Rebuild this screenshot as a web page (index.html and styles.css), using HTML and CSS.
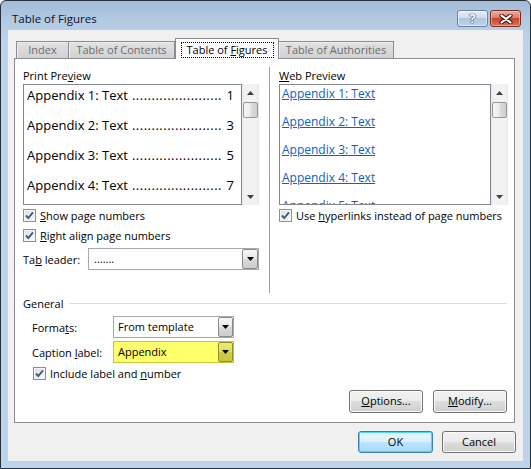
FILE: index.html
```html
<!DOCTYPE html>
<html>
<head>
<meta charset="utf-8">
<link rel="stylesheet" href="styles.css">
</head>
<body>
<div class="window">
  <div class="titlebar">
    <div class="title">Table of Figures</div>
    <div class="capbtn help">?</div>
    <div class="capbtn close">
      <svg width="14" height="10" viewBox="0 0 14 10">
        <path d="M2.5 1.5 L11.5 8.5 M11.5 1.5 L2.5 8.5" stroke="#4a1a12" stroke-width="4.2" stroke-linecap="round"/>
        <path d="M2.5 1.5 L11.5 8.5 M11.5 1.5 L2.5 8.5" stroke="#ffffff" stroke-width="2.2" stroke-linecap="round"/>
      </svg>
    </div>
  </div>
  <div class="client">
    <div class="tabs">
      <div class="tab t-index">Index</div>
      <div class="tab t-toc">Table of Contents</div>
      <div class="tab active t-tof"><span class="focus">Table of <u>F</u>igures</span></div>
      <div class="tab t-toa">Table of Authorities</div>
    </div>
    <div class="panel">
      <div class="top">
        <div class="col left">
          <div class="label">Print Pre<u>v</u>iew</div>
          <div class="previewrow">
            <div class="box print">
              <div class="entry"><span>Appendix 1: Text</span><span class="leader">.......................</span><span class="num">1</span></div>
              <div class="entry"><span>Appendix 2: Text</span><span class="leader">.......................</span><span class="num">3</span></div>
              <div class="entry"><span>Appendix 3: Text</span><span class="leader">.......................</span><span class="num">5</span></div>
              <div class="entry"><span>Appendix 4: Text</span><span class="leader">.......................</span><span class="num">7</span></div>
            </div>
            <div class="vscroll">
              <div class="arrow"><svg width="7" height="4" viewBox="0 0 7 4"><polygon points="0,4 7,4 3.5,0" fill="#404040"/></svg></div>
              <div class="thumb"></div>
              <div class="spacer"></div>
              <div class="arrow"><svg width="7" height="4" viewBox="0 0 7 4"><polygon points="0,0 7,0 3.5,4" fill="#404040"/></svg></div>
            </div>
          </div>
          <div class="check">
            <span class="cb"><svg width="11" height="11" viewBox="0 0 11 11"><path d="M2 5.5 L4.3 8 L9 2.3" fill="none" stroke="#425a8a" stroke-width="1.9"/></svg></span>
            <span><u>S</u>how page numbers</span>
          </div>
          <div class="check">
            <span class="cb"><svg width="11" height="11" viewBox="0 0 11 11"><path d="M2 5.5 L4.3 8 L9 2.3" fill="none" stroke="#425a8a" stroke-width="1.9"/></svg></span>
            <span><u>R</u>ight align page numbers</span>
          </div>
          <div class="field leaderrow">
            <span class="flabel lead">Ta<u>b</u> leader:</span>
            <div class="combo wide">
              <span class="val">.......</span>
              <span class="drop"><svg width="7" height="4" viewBox="0 0 7 4"><polygon points="0,0 7,0 3.5,4" fill="#000"/></svg></span>
            </div>
          </div>
        </div>
        <div class="vline"></div>
        <div class="col right">
          <div class="label"><u>W</u>eb Preview</div>
          <div class="previewrow">
            <div class="box web">
              <div class="link">Appendix 1: Text</div>
              <div class="link">Appendix 2: Text</div>
              <div class="link">Appendix 3: Text</div>
              <div class="link">Appendix 4: Text</div>
              <div class="link">Appendix 5: Text</div>
            </div>
            <div class="vscroll">
              <div class="arrow"><svg width="7" height="4" viewBox="0 0 7 4"><polygon points="0,4 7,4 3.5,0" fill="#404040"/></svg></div>
              <div class="thumb"></div>
              <div class="spacer"></div>
              <div class="arrow"><svg width="7" height="4" viewBox="0 0 7 4"><polygon points="0,0 7,0 3.5,4" fill="#404040"/></svg></div>
            </div>
          </div>
          <div class="check">
            <span class="cb"><svg width="11" height="11" viewBox="0 0 11 11"><path d="M2 5.5 L4.3 8 L9 2.3" fill="none" stroke="#425a8a" stroke-width="1.9"/></svg></span>
            <span>Use <u>h</u>yperlinks instead of page numbers</span>
          </div>
        </div>
      </div>
      <div class="general"><span>General</span><span class="gline"></span></div>
      <div class="field f1">
        <span class="flabel">Forma<u>t</u>s:</span>
        <div class="combo">
          <span class="val">From template</span>
          <span class="drop"><svg width="7" height="4" viewBox="0 0 7 4"><polygon points="0,0 7,0 3.5,4" fill="#000"/></svg></span>
        </div>
      </div>
      <div class="field f2">
        <span class="flabel">Caption <u>l</u>abel:</span>
        <div class="combo yellow">
          <span class="val">Appendix</span>
          <span class="drop"><svg width="7" height="4" viewBox="0 0 7 4"><polygon points="0,0 7,0 3.5,4" fill="#000"/></svg></span>
        </div>
      </div>
      <div class="check include">
        <span class="cb"><svg width="11" height="11" viewBox="0 0 11 11"><path d="M2 5.5 L4.3 8 L9 2.3" fill="none" stroke="#425a8a" stroke-width="1.9"/></svg></span>
        <span>Include label and <u>n</u>umber</span>
      </div>
      <div class="panelbtns">
        <div class="btn"><u>O</u>ptions...</div>
        <div class="btn"><u>M</u>odify...</div>
      </div>
    </div>
    <div class="footer">
      <div class="btn ok">OK</div>
      <div class="btn cancel">Cancel</div>
    </div>
  </div>
</div>
</body>
</html>
```

FILE: styles.css
```css
html, body {
  margin: 0;
  padding: 0;
  background: #ffffff;
}
body {
  font-family: "Open Sans", "Noto Sans", sans-serif;
  font-size: 11px;
  color: #000;
}
u { text-decoration: underline; text-underline-offset: 1px; }

.window {
  width: 531px;
  height: 469px;
  box-sizing: border-box;
  border: 1px solid #28323c;
  border-radius: 6px 6px 0 0;
  background: linear-gradient(#a3bbd7 0px, #b3cae3 20px, #bcd3ec 40px, #bcd3ec 100%);
  padding: 0 7px 7px 7px;
  display: flex;
  flex-direction: column;
  overflow: hidden;
}

.titlebar {
  height: 29px;
  display: flex;
  align-items: flex-start;
  flex: none;
}
.title {
  flex: 1;
  margin: 10px 0 0 4px;
  line-height: 16px;
  font-size: 11.5px;
  color: #0e0e2a;
}
.capbtn {
  margin-top: 9px;
  width: 31px;
  height: 17px;
  box-sizing: border-box;
  border-radius: 3px;
  display: flex;
  align-items: center;
  justify-content: center;
}
.help {
  border: 1px solid #6a819f;
  background: linear-gradient(#e6eef8 0%, #ccdbee 45%, #aec6e2 50%, #bfd4eb 100%);
  box-shadow: inset 0 0 0 1px rgba(255,255,255,0.5);
  color: #fff;
  font-weight: bold;
  font-size: 13px;
  line-height: 15px;
  text-shadow: 0 0 1px #2a3a55, 0 0 1px #2a3a55, 0 0 1px #2a3a55;
}
.close {
  margin-left: 2px;
  margin-right: 2px;
  border: 1px solid #7b2a20;
  background: linear-gradient(#eab0a4 0%, #d87b68 45%, #c5472f 50%, #d9725c 100%);
  box-shadow: inset 0 0 0 1px rgba(255,210,200,0.5);
}

.client {
  flex: 1;
  background: #f0f0f0;
  display: flex;
  flex-direction: column;
}

.tabs {
  height: 28px;
  flex: none;
  display: flex;
  align-items: flex-end;
  padding-left: 8px;
}
.tab {
  box-sizing: border-box;
  height: 17px;
  border: 1px solid #898c95;
  border-bottom: none;
  background: linear-gradient(#e2e2e2, #d2d2d2);
  box-shadow: inset 1px 1px 0 #eeeeee;
  color: #6b6b6b;
  line-height: 16px;
  text-align: center;
  white-space: nowrap;
}
.t-index { width: 53px; }
.t-toc { width: 107px; margin-left: -1px; }
.t-tof { width: 104px; margin-left: 0; }
.t-toa { width: 116px; margin-left: -1px; }
.tab.active {
  height: 21px;
  margin-bottom: -1px;
  position: relative;
  z-index: 1;
  background: #ffffff;
  box-shadow: none;
  color: #000;
  display: flex;
  justify-content: center;
  align-items: flex-start;
  padding-top: 3px;
}
.focus {
  border: 1px dotted #000;
  line-height: 14px;
  padding: 0 5px;
}

.panel {
  flex: 1;
  margin: 0 8px 0 6px;
  border: 1px solid #898c95;
  background: #ffffff;
  display: flex;
  flex-direction: column;
}

.top {
  display: flex;
  height: 226px;
  padding: 8px 0 0 8px;
}
.col { display: flex; flex-direction: column; }
.col.left { width: 236px; }
.col.right { width: 229px; margin-left: 9px; }
.vline {
  width: 1px;
  background: #a0a0a0;
  margin-left: 10px;
}
.label {
  line-height: 17px;
  height: 17px;
}
.previewrow {
  display: flex;
  height: 121px;
}
.box {
  box-sizing: border-box;
  border: 1px solid #828790;
  background: #fff;
  overflow: hidden;
  white-space: nowrap;
}
.box.print {
  width: 219px;
  padding: 0 7px 0 3px;
  font-size: 13px;
}
.entry {
  display: flex;
  line-height: 20px;
  margin-bottom: 10px;
}
.leader {
  margin-left: 4px;
  letter-spacing: 0.5px;
}
.num {
  margin-left: auto;
}
.box.web {
  width: 212px;
  padding: 0 0 0 2px;
  font-size: 12px;
}
.link {
  line-height: 18px;
  margin-bottom: 10px;
  color: #0b63c1;
  text-decoration: underline;
  text-underline-offset: 1px;
}

.vscroll {
  width: 17px;
  box-sizing: border-box;
  background: linear-gradient(90deg, #e6e6e6 0, #f2f2f2 2px, #f2f2f2 15px, #e6e6e6 17px);
  display: flex;
  flex-direction: column;
}
.arrow {
  height: 17px;
  display: flex;
  align-items: center;
  justify-content: center;
}
.thumb {
  height: 16px;
  margin: 1px 1px 0 1px;
  box-sizing: border-box;
  border: 1px solid #979797;
  border-radius: 2px;
  background: linear-gradient(90deg, #f6f6f6 0%, #ececec 45%, #dcdcdc 55%, #cfcfcf 100%);
}
.spacer { flex: 1; }

.check {
  display: flex;
  align-items: center;
  height: 19px;
  margin-top: 1px;
  white-space: nowrap;
}
.cb {
  width: 13px;
  height: 13px;
  box-sizing: border-box;
  border: 1px solid #8e8f8f;
  background: linear-gradient(135deg, #dcdcdc 0%, #f6f6f6 80%, #ffffff 100%);
  box-shadow: inset 0 0 0 1px #f4f4f4;
  margin-right: 4px;
  display: flex;
  align-items: center;
  justify-content: center;
}
.check.include {
  margin-left: 18px;
  margin-top: 1px;
}

.field {
  display: flex;
  align-items: center;
  height: 22px;
}
.leaderrow { margin-top: 3px; }
.flabel { width: 81px; white-space: nowrap; }
.flabel.lead { width: 65px; }
.f1 { margin: 4px 0 0 17px; }
.f2 { margin: 3px 0 0 17px; }

.combo {
  width: 121px;
  height: 22px;
  box-sizing: border-box;
  border: 1px solid #a5a8ae;
  background: #fff;
  display: flex;
  align-items: stretch;
}
.combo.wide { width: 171px; }
.combo .val {
  flex: 1;
  padding-left: 4px;
  line-height: 20px;
  white-space: nowrap;
}
.combo.wide .val { padding-left: 5px; }
.drop {
  width: 15px;
  box-sizing: border-box;
  border: 1px solid #8a8a8a;
  border-radius: 2px;
  background: linear-gradient(#f6f6f6 0%, #e8e8e8 50%, #dadada 50%, #cdcdcd 100%);
  display: flex;
  align-items: center;
  justify-content: center;
}
.combo.wide .drop { width: 16px; }
.combo.yellow {
  background: #ffff6c;
  border-color: #c6c63a;
}
.combo.yellow .drop {
  border-color: #8e8e2e;
  background: linear-gradient(#eded6a 0%, #dede58 50%, #cfcf45 50%, #c6c640 100%);
}

.general {
  display: flex;
  align-items: center;
  height: 17px;
  margin: 2px 7px 0 8px;
}
.gline {
  flex: 1;
  height: 1px;
  background: #d5dfe5;
  margin-left: 6px;
}

.panelbtns {
  display: flex;
  justify-content: flex-end;
  gap: 10px;
  margin: 7px 7px 0 0;
}
.btn {
  box-sizing: border-box;
  width: 74px;
  height: 23px;
  border: 1px solid #707070;
  border-radius: 3px;
  background: linear-gradient(#f2f2f2 0%, #ebebeb 50%, #dddddd 50%, #cfcfcf 100%);
  box-shadow: inset 0 0 0 1px #fbfbfb;
  text-align: center;
  line-height: 20px;
  white-space: nowrap;
}

.footer {
  flex: none;
  display: flex;
  justify-content: flex-end;
  gap: 9px;
  padding: 8px 7px 8px 0;
}
.footer .btn { height: 22px; }
.btn.ok {
  width: 75px;
  border-color: #3c7fb1;
  box-shadow: inset 0 0 0 1px #48d8fb;
  background: linear-gradient(#eaf6fd 0%, #d9f0fc 50%, #bee6fd 50%, #a7d9f5 100%);
}
```
